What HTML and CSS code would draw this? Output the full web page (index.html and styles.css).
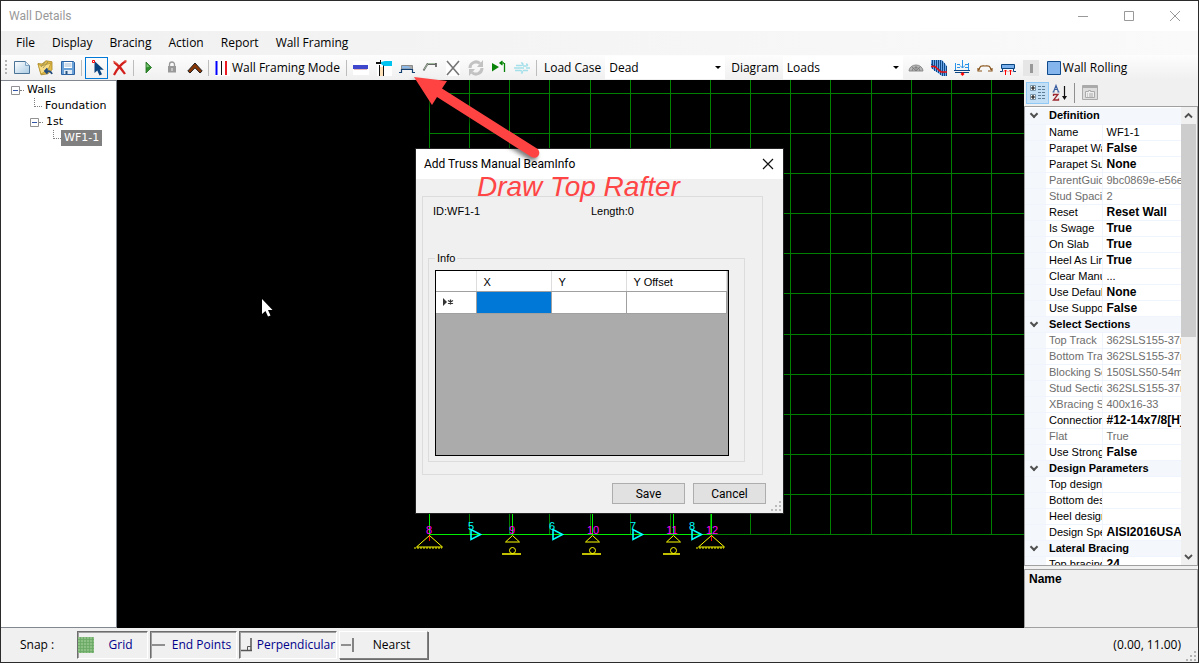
FILE: index.html
```html
<!DOCTYPE html>
<html lang="en">
<head>
<meta charset="utf-8">
<title>Wall Details</title>
<link rel="stylesheet" href="styles.css">
</head>
<body>
<div class="window">
  <header class="titlebar">
    <h1 class="window-title">Wall Details</h1>
    <div class="window-controls">
      <button type="button" class="win-btn" aria-label="Minimize"><svg width="12" height="12" viewBox="0 0 12 12"><path d="M1 6.500h10" stroke="#999"/></svg></button>
      <button type="button" class="win-btn" aria-label="Maximize"><svg width="12" height="12" viewBox="0 0 12 12"><path d="M1.500 1.500h9v9h-9z" fill="none" stroke="#999"/></svg></button>
      <button type="button" class="win-btn" aria-label="Close"><svg width="12" height="12" viewBox="0 0 12 12"><path d="M1 1l10 10M11 1L1 11" stroke="#999"/></svg></button>
    </div>
  </header>

  <nav class="menubar">
    <button type="button" class="menu">File</button>
    <button type="button" class="menu">Display</button>
    <button type="button" class="menu">Bracing</button>
    <button type="button" class="menu">Action</button>
    <button type="button" class="menu">Report</button>
    <button type="button" class="menu">Wall Framing</button>
  </nav>

  <div class="toolbar">
    <span class="grip"></span>
    <button type="button" class="tool" aria-label="New"><svg width="16" height="16" viewBox="0 0 16 16"><defs><linearGradient id="page" x1="0" y1="0" x2="1" y2="1"><stop offset="0" stop-color="#fff"/><stop offset="1" stop-color="#a9cbe4"/></linearGradient></defs><path d="M.5 1.500h11l4 4v8H.5z" fill="url(#page)" stroke="#4a7396"/><path d="M11.500 1.500v4h4" fill="#dcebf5" stroke="#7fa3c0"/></svg></button>
    <button type="button" class="tool" aria-label="Open"><svg width="16" height="16" viewBox="0 0 16 16"><path d="M1 3.500l4 .5L9 .8l6 1v8l-4 4-7 1z" fill="#e0bb4a" stroke="#a78425" stroke-width=".8"/><path d="M1 4l3 2 10-3-3 7-7 4z" fill="#f8dd86" stroke="#b8962d" stroke-width=".8"/><path d="M15 14c-1-3-3-3-6-3M10.500 8.500L8 11l2.500 2.500" fill="none" stroke="#234c7c" stroke-width="1.800"/><path d="M8 2L4 7M11 2L6 8" stroke="#8d8a5a" stroke-width=".8"/></svg></button>
    <button type="button" class="tool" aria-label="Save"><svg width="16" height="16" viewBox="0 0 16 16"><path d="M1.500 1.500h12l1 1v12h-13z" fill="#6aa2d8" stroke="#2d62a2"/><path d="M4 2h8v6H4z" fill="#fff"/><path d="M4.500 4h7M4.500 6h7" stroke="#9eb7d1"/><path d="M4 10h8v4H4z" fill="#e0ebf5"/><path d="M5.500 11h2v3h-2z" fill="#29547f"/></svg></button>
    <span class="sep"></span>
    <button type="button" class="tool tool-active" aria-label="Select"><svg width="16" height="18" viewBox="0 0 16 18"><path d="M5.500 2v12l2.800-2.500 2.200 5 2.500-1.200-2.200-4.500h4z" fill="#0a437e"/><path d="M3.500 1.500h2v2h-2z" fill="#fff" stroke="#f00"/></svg></button>
    <button type="button" class="tool" aria-label="Delete"><svg width="16" height="16" viewBox="0 0 16 16"><path d="M2 2c4 3 8 7 11 12M14 1C9 4 5 9 2 15" fill="none" stroke="#d21f1b" stroke-width="2.200"/><path d="M1 1l5 3M12 1h3" stroke="#ea6a5b"/></svg></button>
    <span class="sep"></span>
    <button type="button" class="tool" aria-label="Run"><svg width="16" height="16" viewBox="0 0 16 16"><path d="M5 2l5.500 5.500L5 13z" fill="#2f8f2b" stroke="#1f6d1d" stroke-width=".8"/><path d="M5.500 3.500l3 3-3 1z" fill="#7cc278"/></svg></button>
    <button type="button" class="tool" aria-label="Lock"><svg width="16" height="16" viewBox="0 0 16 16"><path d="M5.500 7V4.500a2.500 2.500 0 0 1 5 0V7" fill="none" stroke="#999" stroke-width="1.300"/><path d="M4 6h8v6.500H4z" fill="#999"/><path d="M8 8v3" stroke="#eee"/></svg></button>
    <button type="button" class="tool" aria-label="Roof"><svg width="16" height="16" viewBox="0 0 16 16"><path d="M.8 11L8 3l7.200 8-2.200 2L8 7.800 3 13z" fill="#8a3808" stroke="#222" stroke-width="1"/></svg></button>
    <span class="sep"></span>
    <button type="button" class="tool tool-text"><svg width="16" height="16" viewBox="0 0 16 16"><path fill="#fff" d="M0 0h15v16H0z"/><path d="M1.500 1v14" stroke="#00f" stroke-width="2"/><path d="M6.500 1v14" stroke="#111" stroke-width="1"/><path d="M11 1v14" stroke="#ed1c24" stroke-width="2"/></svg>Wall Framing Mode</button>
    <span class="sep"></span>
    <button type="button" class="tool" aria-label="Track"><svg width="16" height="16" viewBox="0 0 16 16"><path d="M0 1h16v14H0z" fill="#fff"/><path d="M0 5h15v4H0z" fill="#3f48cc"/><path d="M1 9.500h13" stroke="#e2b8b8"/></svg></button>
    <button type="button" class="tool" aria-label="Stud connection"><svg width="16" height="16" viewBox="0 0 16 16"><path d="M1 0h15v16H1z" fill="#fff"/><path d="M3.500 5v11M7.500 5v11" stroke="#111"/><path d="M4 7h3v9H4z" fill="#ffe2b8"/><path d="M0 3h8" stroke="#111" stroke-width="2"/><path d="M4.500 0v3" stroke="#111"/><path d="M5 2l4-1h7v5H8L5 4z" fill="#00c4ef"/></svg></button>
    <button type="button" class="tool" aria-label="Draw Top Rafter"><svg width="16" height="16" viewBox="0 0 16 16"><path d="M2.500 9V5.500h11V9z" fill="#8cb9e8" stroke="#8a8a8a"/><path d="M9 6h4v3z" fill="#aaa"/><path d="M0 12.500h2.500V9.500h11v3H16" fill="none" stroke="#123f70" stroke-width="1.200"/></svg></button>
    <button type="button" class="tool" aria-label="Draw rafter"><svg width="16" height="16" viewBox="0 0 16 16"><path d="M1.500 10.500L5.500 4H14v3" fill="none" stroke="#666" stroke-width="1.800"/><path d="M2 9.500L6 3.500h7" fill="none" stroke="#b9ddb4" stroke-width=".7"/></svg></button>
    <button type="button" class="tool" aria-label="Cross bracing"><svg width="16" height="16" viewBox="0 0 16 16"><path d="M1 0h14v16H1z" fill="#fff"/><path d="M2 1l12 14M14 1L2 15" stroke="#777" stroke-width="1.600"/></svg></button>
    <button type="button" class="tool" aria-label="Refresh"><svg width="16" height="16" viewBox="0 0 16 16"><path d="M2 8a6 6 0 0 1 10-4.500M14 8A6 6 0 0 1 4 12.500" fill="none" stroke="#c2c2c2" stroke-width="3"/><path d="M15 0v7H9zM1 16V9h6z" fill="#c2c2c2"/></svg></button>
    <button type="button" class="tool" aria-label="Load direction"><svg width="16" height="16" viewBox="0 0 16 16"><path d="M1 3l7 4-7 4.500z" fill="#078407"/><path d="M13.500 12V3M9 3h4M11.500 1L9 3l2.500 2" fill="none" stroke="#078407" stroke-width="1.300"/></svg></button>
    <button type="button" class="tool" aria-label="Wind"><svg width="16" height="16" viewBox="0 0 16 16"><path d="M2 5.500h5c3 0 2-3 0-2.500M0 8h10M1 10.500h5c3 0 3 3 1 2.500M9 6h3c2 0 2-2 0-2M12 8h4M9 10.500h5" fill="none" stroke="#a5e0ea" stroke-width="1.500"/></svg></button>
    <span class="sep"></span>
    <label class="tool-label" for="load-case">Load Case</label>
    <span class="combo"><select id="load-case"><option>Dead</option></select></span>
    <label class="tool-label" for="diagram">Diagram</label>
    <span class="combo"><select id="diagram"><option>Loads</option></select></span>
    <button type="button" class="tool" aria-label="Protractor"><svg width="16" height="16" viewBox="0 0 16 16"><path d="M1 11a7 6 0 0 1 14 0z" fill="#b5b5b5" stroke="#8b8b8b"/><path d="M4 11a4 3.500 0 0 1 8 0M8 11V6M8 11L4 7M8 11l4-4" fill="none" stroke="#777" stroke-width=".8"/></svg></button>
    <button type="button" class="tool" aria-label="Deck"><svg width="16" height="16" viewBox="0 0 16 16"><path d="M0 0h11l5 6v10h-5L0 8z" fill="#6ba7ea"/><path d="M1.500 0v9M3.500 0v11M5.500 0v12M7.500 0v13M9.500 0v15M11.500 1v15M13.500 3v13M15.500 6v10M0 4l13 9" stroke="#063d7b" stroke-width=".9"/><path d="M0 6.500h4l6 5.500h6" fill="none" stroke="#f01010" stroke-width="1.600"/></svg></button>
    <button type="button" class="tool" aria-label="Point loads"><svg width="16" height="16" viewBox="0 0 16 16"><path d="M8.500 0v8M6 5.500L8.500 8 11 5.500M1.500 3v8M14.500 3v8M3 4.500h3M11 4.500h3M3 7.500h3M11 7.500h3" fill="none" stroke="#2b93e8"/><path d="M0 10.500h16M1 12.500h14" stroke="#0a4480"/><path d="M8.500 12l-2 2 2 2 2-2z" fill="#f00"/></svg></button>
    <button type="button" class="tool" aria-label="Moment"><svg width="16" height="16" viewBox="0 0 16 16"><path d="M2 10c1-5 3-4 6-4s5-1 6 4M1 8v3h4M15 8v3h-4" fill="none" stroke="#8a551c" stroke-width="1.200"/></svg></button>
    <button type="button" class="tool" aria-label="Reactions"><svg width="16" height="16" viewBox="0 0 16 16"><path d="M1.500 4.500h13v4h-13z" fill="#78aeea" stroke="#0a4480"/><path d="M0 11.500h2.500v-3M16 11.500h-2.500v-3" fill="none" stroke="#0a4480"/><path d="M5.500 10v5M10.500 10v5M4 11.500l1.500-1.500L7 11.500M9 11.500l1.500-1.500 1.500 1.500" fill="none" stroke="#f00"/></svg></button>
    <button type="button" class="tool" aria-label="Member" disabled><svg width="16" height="16" viewBox="0 0 16 16"><path d="M0 0h16v16H0z" fill="#e6e6e6"/><path d="M7 4h3v9H7z" fill="#999"/></svg></button>
    <button type="button" class="tool tool-text"><svg width="16" height="16" viewBox="0 0 16 16"><path d="M1.500 1.500h13v13h-13z" fill="#84b5ed" stroke="#0f4b8c"/></svg>Wall Rolling</button>
  </div>

  <main class="workspace">
    <aside class="tree">
      <ul>
        <li><div class="node"><svg class="expander" width="9" height="9" viewBox="0 0 9 9"><path d="M.5.500h8v8h-8z" fill="#fff" stroke="#919191"/><path d="M2 4.500h5" stroke="#3355a8"/></svg><span class="stub"></span><span class="node-text">Walls</span></div>
          <ul>
            <li><div class="node"><span class="leaf leaf-more"></span><span class="node-text">Foundation</span></div></li>
            <li><div class="node"><svg class="expander" width="9" height="9" viewBox="0 0 9 9"><path d="M.5.500h8v8h-8z" fill="#fff" stroke="#919191"/><path d="M2 4.500h5" stroke="#3355a8"/></svg><span class="stub"></span><span class="node-text">1st</span></div>
              <ul>
                <li><div class="node"><span class="leaf"></span><span class="node-text selected">WF1-1</span></div></li>
              </ul>
            </li>
          </ul>
        </li>
      </ul>
    </aside>

    <section class="canvas" aria-label="Wall drawing">
      <svg class="drawing" width="100%" height="100%">
        <g transform="translate(-117 -80)" fill="none">
          <path stroke="#008000" shape-rendering="crispEdges" d="M429.500 80V534M469.500 80V534M509.500 80V534M549.500 80V534M590.500 80V534M630.500 80V534M670.500 80V534M710.500 80V534M750.500 80V534M790.500 80V534M830.500 80V534M871.500 80V534M911.500 80V534M951.500 80V534M991.500 80V534M429 93.500H1024M429 133.500H1024M429 173.500H1024M429 213.500H1024M429 253.500H1024M429 293.500H1024M429 334.500H1024M429 374.500H1024M429 414.500H1024M429 454.500H1024M429 494.500H1024M429 534.500H1024"/>
          <path stroke="#00f000" shape-rendering="crispEdges" d="M429 534.500H711M429.500 500V534M512.500 500V534M592.500 500V534M673.500 500V534M711.500 500V534"/>
          <path stroke="#f00" d="M429.500 535v6M711.500 535v6"/>
          <path stroke="#ff0" d="M429.500 535.500l-13 11.500h26zM711.500 535.500l-13 11.500h26zM512.500 535.500l-7 6.500h14zM592.500 535.500l-7 6.500h14zM673.500 535.500l-7 6.500h14z"/>
          <path stroke="#ff0" d="M414 548h28M696 548h28" stroke-dasharray="2 1"/>
          <path stroke="#ff0" stroke-width="1.500" d="M502 554h19M582 554h19M663 554h17"/>
          <g stroke="#ff0"><circle cx="512.500" cy="550.500" r="3"/><circle cx="592.500" cy="550.500" r="3"/><circle cx="673.500" cy="550.500" r="3"/></g>
          <path stroke="#0ff" stroke-width="1.600" d="M471 529.500v10l9.500-5zM553 529.500v10l9.500-5zM633 529.500v10l9.500-5zM692 529.500v10l9.500-5z"/>
        </g>
        <g transform="translate(-117 -80)" class="marks">
          <g fill="#f0f"><text x="429" y="534">8</text><text x="512" y="534">9</text><text x="593" y="534">10</text><text x="672" y="534">11</text><text x="712" y="534">12</text></g>
          <g fill="#0ff"><text x="471" y="530">5</text><text x="552" y="530">6</text><text x="633" y="530">7</text><text x="692" y="530">8</text></g>
          <path d="M262 299v15l3.500-3 2.500 5.500 2.500-1-2.500-5.500h4.500z" fill="#fff"/>
        </g>
      </svg>
    </section>

    <aside class="props">
      <div class="props-tools">
        <button type="button" class="ptool ptool-active" aria-label="Categorized"><svg width="18" height="18" viewBox="0 0 18 18"><path d="M1.500 1.500h5v5h-5zM1.500 10.500h5v5h-5z" fill="#fff" stroke="#7b97ac"/><path d="M2 4h4M4 2v4M2 13h4M4 11v4" stroke="#111" stroke-width="1.200"/><path d="M9 2.500h3M9 5.500h3M9 8.500h3M9 11.500h3M9 14.500h3M13 2.500h3M13 5.500h3M13 8.500h3M13 11.500h3M13 14.500h3" stroke="#5e7e98"/></svg></button>
        <button type="button" class="ptool" aria-label="Alphabetical"><svg width="18" height="18" viewBox="0 0 18 18"><path d="M1.500 8L4 1.500 6.500 8M2.500 5.500h3M.5 8h2M5.500 8h2" fill="none" stroke="#3a5fa0" stroke-width="1.200"/><path d="M1.500 12v-1.500H6L1.500 16H6.500v-1.500" fill="none" stroke="#9c2730" stroke-width="1.300"/><path d="M12.500 2v12" stroke="#111" stroke-width="1.200"/><path d="M10 12h5l-2.500 4z" fill="#111"/></svg></button>
        <span class="psep"></span>
        <button type="button" class="ptool" aria-label="Property pages" disabled><svg width="18" height="18" viewBox="0 0 18 18"><path d="M1.500 1.500h15v14h-15z" fill="#ddd" stroke="#aaa"/><path d="M2 3h14" stroke="#aaa" stroke-width="2"/><path d="M4.500 7.500h3v-1h2v1h4v6h-9z" fill="#eee" stroke="#aaa"/><path d="M6 10h1M8 10h4M6 12h1M8 12h4" stroke="#aaa"/></svg></button>
      </div>
      <div class="grid-box">
        <div class="grid-view">
          <table class="grid">
            <colgroup><col class="c-gutter"><col class="c-name"><col class="c-value"></colgroup>
            <tbody>
              <tr class="cat"><td><span class="chev"></span></td><th colspan="2">Definition</th></tr>
              <tr><td></td><th>Name</th><td>WF1-1</td></tr>
              <tr><td></td><th>Parapet Wall</th><td class="set">False</td></tr>
              <tr><td></td><th>Parapet Support</th><td class="set">None</td></tr>
              <tr class="ro"><td></td><th>ParentGuid</th><td>9bc0869e-e56e</td></tr>
              <tr class="ro"><td></td><th>Stud Spacing</th><td>2</td></tr>
              <tr><td></td><th>Reset</th><td class="set">Reset Wall</td></tr>
              <tr><td></td><th>Is Swage</th><td class="set">True</td></tr>
              <tr><td></td><th>On Slab</th><td class="set">True</td></tr>
              <tr><td></td><th>Heel As Line</th><td class="set">True</td></tr>
              <tr><td></td><th>Clear Manual</th><td>...</td></tr>
              <tr><td></td><th>Use Default</th><td class="set">None</td></tr>
              <tr><td></td><th>Use Support</th><td class="set">False</td></tr>
              <tr class="cat"><td><span class="chev"></span></td><th colspan="2">Select Sections</th></tr>
              <tr class="ro"><td></td><th>Top Track</th><td>362SLS155-37mil</td></tr>
              <tr class="ro"><td></td><th>Bottom Track</th><td>362SLS155-37mil</td></tr>
              <tr class="ro"><td></td><th>Blocking Section</th><td>150SLS50-54mil</td></tr>
              <tr class="ro"><td></td><th>Stud Section</th><td>362SLS155-37mil</td></tr>
              <tr class="ro"><td></td><th>XBracing Section</th><td>400x16-33</td></tr>
              <tr><td></td><th>Connection</th><td class="set">#12-14x7/8[H]</td></tr>
              <tr class="ro"><td></td><th>Flat</th><td>True</td></tr>
              <tr><td></td><th>Use Strong</th><td class="set">False</td></tr>
              <tr class="cat"><td><span class="chev"></span></td><th colspan="2">Design Parameters</th></tr>
              <tr><td></td><th>Top design</th><td></td></tr>
              <tr><td></td><th>Bottom design</th><td></td></tr>
              <tr><td></td><th>Heel design</th><td></td></tr>
              <tr><td></td><th>Design Spec</th><td class="set">AISI2016USA</td></tr>
              <tr class="cat"><td><span class="chev"></span></td><th colspan="2">Lateral Bracing</th></tr>
              <tr><td></td><th>Top bracing</th><td class="set">24</td></tr>
            </tbody>
          </table>
        </div>
        <div class="scrollbar">
          <svg width="15" height="17" viewBox="0 0 15 17"><path d="M4 10.500L7.500 7l3.500 3.500" fill="none" stroke="#505050" stroke-width="1.800"/></svg>
          <span class="thumb"></span>
          <svg class="down" width="15" height="17" viewBox="0 0 15 17"><path d="M4 7l3.500 3.500L11 7" fill="none" stroke="#505050" stroke-width="1.800"/></svg>
        </div>
      </div>
      <div class="help">Name</div>
    </aside>
  </main>

  <footer class="statusbar">
    <span class="snap-label">Snap :</span>
    <button type="button" class="snap snap-grid pressed"><svg width="16" height="16" viewBox="0 0 16 16"><path d="M0 0h16v16H0z" fill="#8cc084"/><path d="M2.500 0v16M5.500 0v16M8.500 0v16M11.500 0v16M14.500 0v16M0 2.500h16M0 5.500h16M0 8.500h16M0 11.500h16M0 14.500h16" stroke="#6aa864" stroke-width=".8"/></svg><span>Grid</span></button>
    <button type="button" class="snap snap-end pressed"><svg width="16" height="16" viewBox="0 0 16 16"><path d="M1 8h13" stroke="#777" stroke-width="1.600"/></svg><span>End Points</span></button>
    <button type="button" class="snap snap-perp pressed"><svg width="16" height="16" viewBox="0 0 16 16"><path d="M11 1v13M1 13.500h11" stroke="#555" stroke-width="1.500"/><path d="M7.500 13V9.500H11" fill="none" stroke="#555"/></svg><span>Perpendicular</span></button>
    <button type="button" class="snap snap-near"><svg width="16" height="16" viewBox="0 0 16 16"><path d="M1 8h10" stroke="#777" stroke-width="1.600"/><path d="M13 1v14" stroke="#555" stroke-width="1.400"/></svg><span>Nearst</span></button>
    <span class="coords">(0.00, 11.00)</span>
    <svg class="sizer" width="12" height="12" viewBox="0 0 12 12"><path d="M9 1h2v2H9zM5 5h2v2H5zM9 5h2v2H9zM1 9h2v2H1zM5 9h2v2H5zM9 9h2v2H9z" fill="#b4b4b4"/></svg>
  </footer>
</div>

<section class="dialog" role="dialog" aria-labelledby="dlg-title">
  <header class="dlg-bar">
    <h2 id="dlg-title" class="dlg-title">Add Truss Manual BeamInfo</h2>
    <button type="button" class="dlg-close" aria-label="Close"><svg width="12" height="12" viewBox="0 0 12 12"><path d="M1 1l10 10M11 1L1 11" stroke="#111" stroke-width="1.200"/></svg></button>
  </header>
  <div class="dlg-body">
    <div class="group">
      <div class="facts"><span>ID:WF1-1</span><span>Length:0</span></div>
      <fieldset class="info">
        <legend>Info</legend>
        <div class="sheet-box">
          <table class="sheet">
            <colgroup><col class="s-row"><col class="s-xy"><col class="s-xy"><col></colgroup>
            <thead><tr><th></th><th>X</th><th>Y</th><th>Y Offset</th></tr></thead>
            <tbody><tr><td class="row-head"><svg width="12" height="8" viewBox="0 0 12 8"><path d="M1 0v8l4-4z" fill="#333"/><path d="M8.500 1.500v5M6 2.500l5 3M11 2.500l-5 3" stroke="#333" stroke-width="1.200"/></svg></td><td class="current"></td><td></td><td></td></tr></tbody>
          </table>
        </div>
      </fieldset>
    </div>
    <div class="dlg-actions">
      <button type="button" class="btn">Save</button>
      <button type="button" class="btn">Cancel</button>
    </div>
  </div>
  <svg class="dlg-sizer" width="12" height="12" viewBox="0 0 12 12"><path d="M9 1h2v2H9zM5 5h2v2H5zM9 5h2v2H9zM1 9h2v2H1zM5 9h2v2H5zM9 9h2v2H9z" fill="#bbb"/></svg>
</section>

<svg class="arrow" width="140" height="95" viewBox="0 0 140 95"><path d="M4 7l33 4-5 7.500 95 60a5 5 0 0 1-5.500 8.500L27 27l-5 8z" fill="#ff4343"/></svg>
<p class="note">Draw Top Rafter</p>
</body>
</html>
```
FILE: styles.css
```css
* { box-sizing: border-box; }

body {
  margin: 0;
  font: 12px/16px "Open Sans", "Noto Sans", sans-serif;
  color: #000;
}

button, select { font: inherit; color: inherit; }
svg { display: block; flex: none; }
h1, h2, p { margin: 0; font-weight: 400; }

.window {
  display: flex;
  flex-direction: column;
  height: 100vh;
  border: 1px solid #2b2b2b;
  background: #f0f0f0;
}

/* Title bar */
.titlebar {
  display: flex;
  justify-content: space-between;
  align-items: center;
  height: 30px;
  flex: none;
  padding-left: 8px;
  background: #fff;
}
.window-title { font: 12px/16px Roboto, "Open Sans", sans-serif; color: #999; }
.window-controls { display: flex; }
.win-btn {
  display: grid;
  place-items: center;
  width: 46px;
  height: 30px;
  padding: 0;
  border: 0;
  background: none;
}

/* Menus */
.menubar {
  display: flex;
  align-items: center;
  height: 24px;
  flex: none;
  padding-left: 7px;
  background: linear-gradient(90deg, #f0f0f0, #fafafa);
}
.menu { padding: 0 9px 0 8px; border: 0; background: none; white-space: nowrap; }

/* Toolbar */
.toolbar {
  display: flex;
  align-items: center;
  height: 25px;
  flex: none;
  padding-left: 4px;
  background: linear-gradient(#fdfdfd, #f0f0f0);
  white-space: nowrap;
}
.grip {
  width: 2px;
  height: 15px;
  margin-right: 3px;
  background: repeating-linear-gradient(#b4b4b4 0 2px, transparent 2px 4px);
}
.tool {
  display: grid;
  place-items: center;
  width: 23px;
  height: 22px;
  flex: none;
  padding: 0;
  border: 0;
  background: none;
}
.tool-active { border: 1px solid #0078d7; }
.tool-text {
  display: flex;
  align-items: center;
  gap: 1px;
  width: auto;
  padding: 0 4px 0 3px;
}
.sep {
  width: 1px;
  height: 16px;
  flex: none;
  margin: 0 3px 0 2px;
  background: #bdbdbd;
}
.tool-label { padding: 0 4px; }
.combo { position: relative; width: 120px; height: 23px; flex: none; margin-right: 2px; }
.combo::after {
  content: "";
  position: absolute;
  right: 4px;
  top: 10px;
  border: 3px solid transparent;
  border-top-color: #000;
  border-bottom: 0;
}
.combo select {
  appearance: none;
  width: 100%;
  height: 100%;
  padding: 0 4px;
  border: 0;
  background: #fff;
}

/* Work area */
.workspace { display: flex; flex: 1; min-height: 0; }
.tree {
  width: 116px;
  flex: none;
  padding: 1px 0 0 10px;
  border: 1px solid #828790;
  border-left: 0;
  background: #fff;
  font: 11px/16px "DejaVu Sans", sans-serif;
}
.tree ul { margin: 0; padding: 0; list-style: none; }
.tree ul ul { padding-left: 19px; }
.node { display: flex; align-items: center; height: 16px; }
.stub { width: 4px; border-top: 1px dotted #808080; }
.leaf {
  width: 8px;
  height: 9px;
  margin: 0 0 8px 4px;
  border: 1px dotted #808080;
  border-width: 0 0 1px 1px;
}
.leaf-more { box-shadow: none; }
.node-text { padding: 0 3px; }
.selected { background: #808080; color: #fff; }

.canvas { flex: 1; min-width: 0; background: #000; }
.marks { font: 11px "Liberation Sans", sans-serif; text-anchor: middle; }

/* Property panel */
.props {
  display: flex;
  flex-direction: column;
  width: 174px;
  flex: none;
  font: 11px/15px "Liberation Sans", Arial, sans-serif;
}
.props-tools { display: flex; align-items: center; height: 26px; flex: none; padding-left: 2px; }
.ptool {
  display: grid;
  place-items: center;
  width: 23px;
  height: 22px;
  padding: 0;
  border: 0;
  background: none;
}
.ptool-active { border: 1px solid #90c8f6; background: #c2dff5; }
.psep { width: 1px; height: 20px; margin: 0 3px 0 2px; background: #8f8f8f; }
.grid-box {
  display: flex;
  flex: 1;
  min-height: 0;
  border: 1px solid #a0a0a0;
  background: #fff;
}
.grid-view { flex: 1; min-width: 0; overflow: hidden; padding-top: 1px; }
.grid { width: 100%; table-layout: fixed; border-collapse: collapse; }
.c-gutter { width: 21px; }
.c-name { width: 56px; }
.grid tr { height: 16px; }
.grid td, .grid th {
  padding: 0 1px 0 3px;
  border-bottom: 1px solid #f0f4fc;
  font-weight: 400;
  text-align: left;
  white-space: nowrap;
  overflow: hidden;
}
.grid td:first-child { padding: 0 3px 0 0; background: #f4f7fc; }
.grid td:last-child { padding: 0 0 0 4px; border-left: 1px solid #f0f4fc; }
.grid .ro { color: #6d6d6d; }
.grid .set { font-size: 12px; font-weight: 700; }
.grid .cat th { background: #f4f7fc; font-weight: 700; }
.chev {
  display: block;
  width: 6px;
  height: 6px;
  margin: -3px auto 0;
  border: solid #505050;
  border-width: 0 2px 2px 0;
  transform: rotate(45deg);
}
.scrollbar {
  display: flex;
  flex-direction: column;
  width: 16px;
  flex: none;
  background: #f0f0f0;
}
.thumb { height: 46.4%; width: 15px; background: #cdcdcd; }
.down { margin-top: auto; }
.help {
  height: 59px;
  flex: none;
  margin-top: 3px;
  padding: 2px 4px;
  border: 1px solid #a0a0a0;
  font-size: 12px;
  font-weight: 700;
}

/* Status bar */
.statusbar {
  display: flex;
  align-items: center;
  gap: 2px;
  height: 34px;
  flex: none;
  padding-left: 19px;
}
.snap-label { width: 55px; }
.snap {
  display: flex;
  align-items: center;
  height: 28px;
  padding: 0;
  border: 1px solid;
  border-color: #fff #808080 #808080 #fff;
  box-shadow: 1px 1px 0 #6d6d6d;
  background: #f0f0f0;
  white-space: nowrap;
}
.snap span { flex: 1; text-align: center; }
.pressed {
  border-color: #6d6d6d #fff #fff #6d6d6d;
  box-shadow: inset 1px 1px 0 #a0a0a0;
  color: #00008b;
}
.snap-grid { width: 71px; }
.snap-end { width: 87px; }
.snap-perp { width: 98px; }
.snap-near { width: 89px; }
.coords { margin: 0 2px 0 auto; }
.sizer { align-self: flex-end; margin-right: 1px; }

/* Dialog floating over the drawing */
.dialog {
  position: absolute;
  left: 416px;
  top: 149px;
  width: 367px;
  background: #f0f0f0;
  box-shadow: 0 0 0 1px #222;
  font: 11px/14px "Liberation Sans", Arial, sans-serif;
}
.dlg-bar {
  display: flex;
  justify-content: space-between;
  align-items: center;
  height: 30px;
  padding-left: 8px;
  background: #fff;
}
.dlg-title { font: 12px/16px Roboto, "Open Sans", sans-serif; }
.dlg-close {
  display: grid;
  place-items: center;
  width: 30px;
  height: 30px;
  padding: 0;
  border: 0;
  background: none;
}
.dlg-body { padding: 17px 17px 9px 6px; }
.group {
  height: 279px;
  margin-right: 3px;
  padding: 7px 17px 0 5px;
  border: 1px solid #dcdcdc;
}
.facts { display: grid; grid-template-columns: 158px 1fr; height: 47px; padding-left: 5px; }
.info { margin: 0; padding: 5px 15px 5px 6px; border: 1px solid #dcdcdc; }
.info legend { padding: 0 2px; }
.sheet-box { height: 186px; border: 1px solid #000; background: #ababab; padding-right: 1px; }
.sheet { width: 100%; table-layout: fixed; border-collapse: collapse; background: #fff; }
.s-row { width: 40px; }
.s-xy { width: 75px; }
.sheet th { height: 20px; padding: 2px 7px 0; border-right: 1px solid #ddd; border-bottom: 1px solid #a0a0a0; font-weight: 400; text-align: left; }
.sheet td { height: 22px; padding: 0; border: 1px solid #a0a0a0; border-left: 0; }
.sheet .row-head { padding-left: 6px; }
.sheet .current { background: #0078d7; }
.dlg-actions { display: flex; justify-content: flex-end; gap: 8px; margin-top: 8px; }
.btn {
  width: 73px;
  height: 21px;
  padding: 0;
  border: 1px solid #adadad;
  background: #e1e1e1;
  font: 12px/16px Roboto, "Open Sans", sans-serif;
}
.dlg-sizer { position: absolute; right: 1px; bottom: 1px; }

/* Callout drawn over the window */
.arrow {
  position: absolute;
  left: 410px;
  top: 70px;
  filter: drop-shadow(-2px 3px 2px rgba(0, 0, 0, .5));
  pointer-events: none;
}
.note {
  position: absolute;
  left: 477px;
  top: 171px;
  font: italic 28px/32px "Liberation Sans", Arial, sans-serif;
  color: #ff4545;
  white-space: nowrap;
}
```
